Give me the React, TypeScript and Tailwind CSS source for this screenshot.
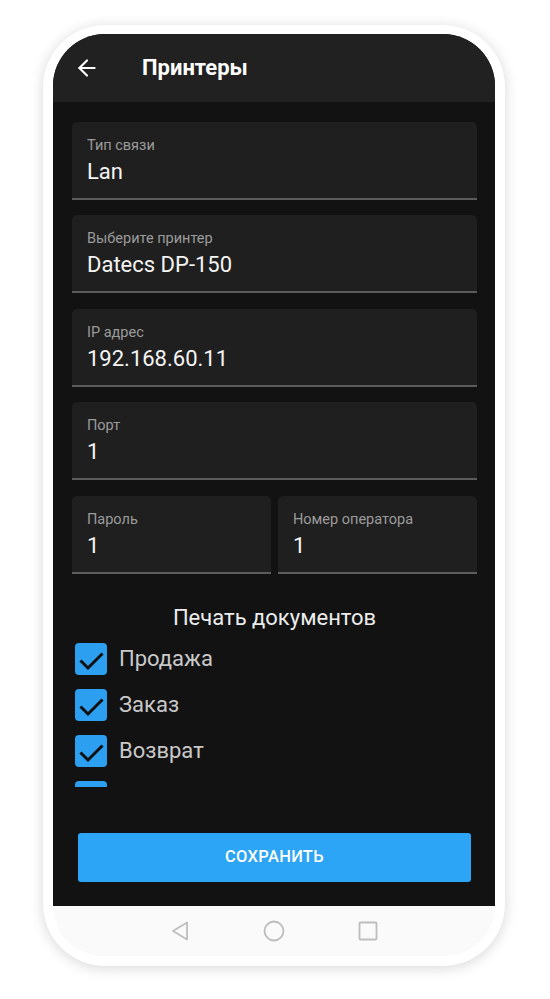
import { ArrowLeft } from 'lucide-react';

function Field({ label, value }: { label: string; value: string }) {
  return (
    <div className="h-[78px] bg-[#1f1f1f] rounded-t-[5px] border-b-2 border-[#5c5c5c] px-[15px] pt-[15px]">
      <p className="text-[14.5px] leading-[17px] text-[#9b9b9b]">{label}</p>
      <p className="mt-[5px] text-[22px] leading-[26px] text-[#f4f4f4]">{value}</p>
    </div>
  );
}

function Check({ label }: { label?: string }) {
  return (
    <div className="h-[46px] flex items-center shrink-0">
      <div className="ml-[3px] w-[32px] h-[32px] rounded-[4px] bg-[#2c9ff0] flex items-center justify-center">
        <svg width="32" height="32" viewBox="0 0 32 32" fill="none">
          <path d="M6.5 18.5l6.5 6.5L26.5 11.5" stroke="#111111" strokeWidth="3" strokeLinecap="square" />
        </svg>
      </div>
      {label && <span className="ml-[12px] text-[22px] leading-[26px] text-[#c9c9c9]">{label}</span>}
    </div>
  );
}

export default function App() {
  return (
    <div className="w-[550px] h-[999px] bg-white pt-[25px] pl-[43px]" style={{ fontFamily: 'Roboto, "Noto Sans", sans-serif' }}>
      <div className="w-[462px] h-[941px] bg-white rounded-[62px] shadow-[0_2px_14px_rgba(0,0,0,0.16)] pt-[9px] px-[10px] pb-[10px] flex flex-col">
        <div className="h-[872px] rounded-t-[52px] overflow-hidden bg-[#121212] flex flex-col">
          {/* toolbar */}
          <div className="h-[68px] bg-[#212121] flex items-center shrink-0">
            <ArrowLeft size={26} strokeWidth={2} className="ml-[21px] text-white" />
            <h1 className="ml-[42px] text-[22px] leading-[26px] font-bold text-white">Принтеры</h1>
          </div>

          {/* form */}
          <div className="h-[685px] overflow-hidden pl-[19px] pr-[18px] pt-[20px] shrink-0">
            <Field label="Тип связи" value="Lan" />
            <div className="mt-[15px]">
              <Field label="Выберите принтер" value="Datecs DP-150" />
            </div>
            <div className="mt-[16px]">
              <Field label="IP адрес" value="192.168.60.11" />
            </div>
            <div className="mt-[15px]">
              <Field label="Порт" value="1" />
            </div>
            <div className="mt-[16px] grid grid-cols-2 gap-[7px]">
              <Field label="Пароль" value="1" />
              <Field label="Номер оператора" value="1" />
            </div>

            <h2 className="mt-[31px] text-center text-[22px] leading-[26px] text-[#ececec]">Печать документов</h2>
            <div className="mt-[5px] flex flex-col">
              <Check label="Продажа" />
              <Check label="Заказ" />
              <Check label="Возврат" />
              <Check />
            </div>
          </div>

          {/* save */}
          <div className="flex-1 pt-[46px] pl-[25px] pr-[24px]">
            <button className="w-full h-[49px] bg-[#2ca5f6] rounded-[3px] text-white text-[16.5px] font-medium tracking-[0.3px]">
              СОХРАНИТЬ
            </button>
          </div>
        </div>

        {/* nav bar */}
        <div className="h-[50px] bg-[#fafafa] rounded-b-[52px] flex items-center justify-center gap-[66px] shrink-0">
          <svg width="28" height="28" viewBox="0 0 28 28" fill="none">
            <path d="M21 5.5v17L7 14z" stroke="#bdbdbd" strokeWidth="1.8" strokeLinejoin="round" />
          </svg>
          <svg width="28" height="28" viewBox="0 0 28 28" fill="none">
            <circle cx="14" cy="14" r="9.5" stroke="#bdbdbd" strokeWidth="1.8" />
          </svg>
          <svg width="28" height="28" viewBox="0 0 28 28" fill="none">
            <rect x="5.5" y="5.5" width="17" height="17" rx="1" stroke="#bdbdbd" strokeWidth="1.8" />
          </svg>
        </div>
      </div>
    </div>
  );
}
